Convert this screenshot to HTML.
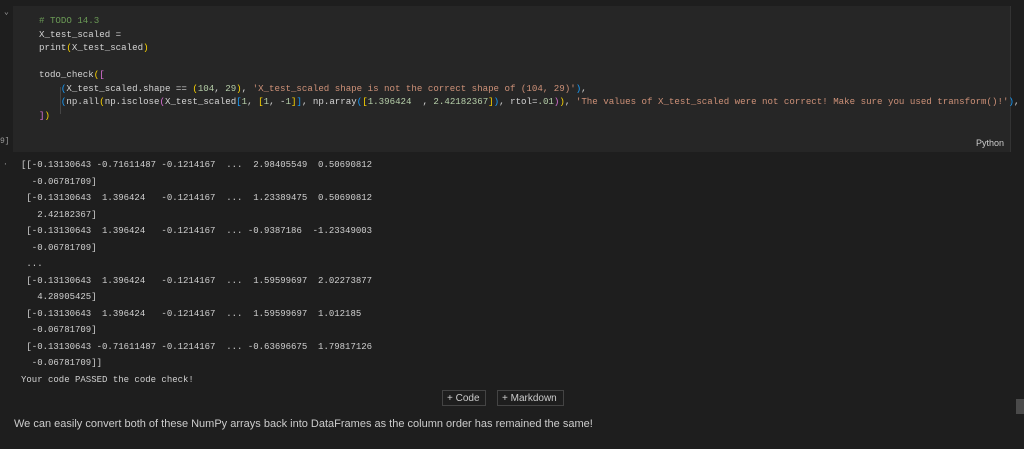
<!DOCTYPE html><html><head><style>
body{margin:0;width:1024px;height:449px;background:#1e1e1e;overflow:hidden;position:relative;font-family:"Liberation Mono",monospace;}
.cell{position:absolute;left:13px;top:6px;width:997px;height:146px;background:#262626;border-right:1px solid #333;}
.code{position:absolute;left:39px;top:14px;font-size:9.15px;line-height:13.5px;color:#d4d4d4;white-space:pre;}
.c{color:#6a9955}.y{color:#ffd700}.s{color:#ce9178}.n{color:#b5cea8}.m{color:#da70d6}.b{color:#179fff}
.out{position:absolute;left:21px;top:157px;font-size:9px;line-height:16.5px;color:#d0d0d0;white-space:pre;}
.btn{position:absolute;top:390px;height:16px;border:1px solid #444;color:#ccc;font:10px "Liberation Sans",sans-serif;line-height:16px;padding:0 4px;box-sizing:border-box}
</style></head><body>
<div style="position:absolute;left:4px;top:7px;color:#aaa;font-size:8px">⌄</div>
<div class="cell"></div>
<div style="position:absolute;left:60px;top:87px;width:1px;height:27px;background:#444"></div>
<div class="code"><span class="c"># TODO 14.3</span>
X_test_scaled =
print<span class="y">(</span>X_test_scaled<span class="y">)</span>

todo_check<span class="y">(</span><span class="m">[</span>
    <span class="b">(</span>X_test_scaled.shape == <span class="y">(</span><span class="n">104</span>, <span class="n">29</span><span class="y">)</span>, <span class="s">'X_test_scaled shape is not the correct shape of (104, 29)'</span><span class="b">)</span>,
    <span class="b">(</span>np.all<span class="y">(</span>np.isclose<span class="m">(</span>X_test_scaled<span class="b">[</span><span class="n">1</span>, <span class="y">[</span><span class="n">1</span>, -<span class="n">1</span><span class="y">]</span><span class="b">]</span>, np.array<span class="b">(</span><span class="y">[</span><span class="n">1.396424</span>  , <span class="n">2.42182367</span><span class="y">]</span><span class="b">)</span>, rtol=<span class="n">.01</span><span class="m">)</span><span class="y">)</span>, <span class="s">'The values of X_test_scaled were not correct! Make sure you used transform()!'</span><span class="b">)</span>,
<span class="m">]</span><span class="y">)</span></div>
<div style="position:absolute;left:0;top:137px;color:#999;font-size:8px">9]</div>
<div style="position:absolute;left:976px;top:138px;color:#ccc;font:9px 'Liberation Sans',sans-serif">Python</div>
<div style="position:absolute;left:3px;top:160px;color:#999;font-size:8px">·</div>
<div class="out">[[-0.13130643 -0.71611487 -0.1214167  ...  2.98405549  0.50690812
  -0.06781709]
 [-0.13130643  1.396424   -0.1214167  ...  1.23389475  0.50690812
   2.42182367]
 [-0.13130643  1.396424   -0.1214167  ... -0.9387186  -1.23349003
  -0.06781709]
 ...
 [-0.13130643  1.396424   -0.1214167  ...  1.59599697  2.02273877
   4.28905425]
 [-0.13130643  1.396424   -0.1214167  ...  1.59599697  1.012185
  -0.06781709]
 [-0.13130643 -0.71611487 -0.1214167  ... -0.63696675  1.79817126
  -0.06781709]]
Your code PASSED the code check!</div>
<div class="btn" style="left:442px;width:44px">+ Code</div>
<div class="btn" style="left:497px;width:67px">+ Markdown</div>
<div style="position:absolute;left:14px;top:418px;color:#ccc;font:11px 'Liberation Sans',sans-serif">We can easily convert both of these NumPy arrays back into DataFrames as the column order has remained the same!</div>
<div style="position:absolute;left:1016px;top:399px;width:8px;height:15px;background:#4a4a4a"></div>
</body></html>
